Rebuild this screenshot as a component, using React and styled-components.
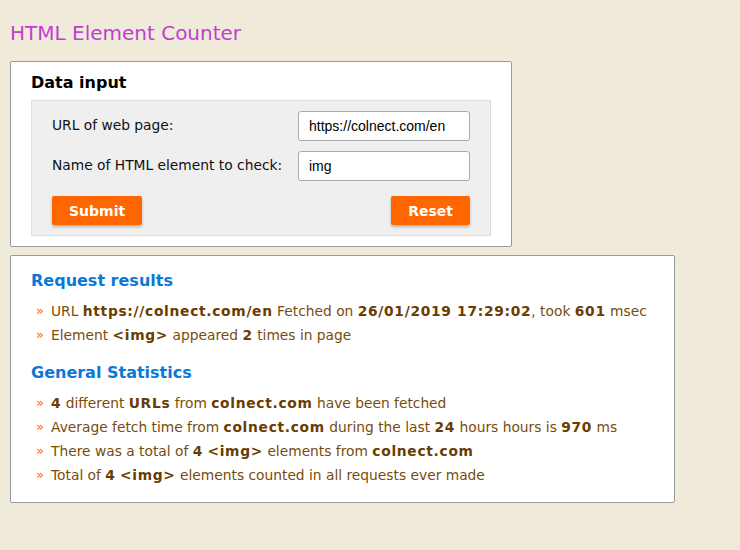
import React from 'react'
import styled, { createGlobalStyle } from 'styled-components'

const GlobalStyle = createGlobalStyle`
    body {
        margin: 0;
        background-color: #f0eada;
        font-family: "DejaVu Sans", Verdana, sans-serif;
    }
`

const App = () => {
    return (
        <Page>
            <GlobalStyle />
            <Title>HTML Element Counter</Title>
            <Card>
                <CardTitle>Data input</CardTitle>
                <Form onSubmit={(e) => e.preventDefault()}>
                    <Label htmlFor="url">URL of web page:</Label>
                    <Input id="url" defaultValue="https://colnect.com/en" />
                    <Label htmlFor="el">Name of HTML element to check:</Label>
                    <Input id="el" defaultValue="img" />
                    <Buttons>
                        <Button type="submit">Submit</Button>
                        <Button type="reset">Reset</Button>
                    </Buttons>
                </Form>
            </Card>
            <Card $wide>
                <SectionTitle>Request results</SectionTitle>
                <List>
                    <Item>URL <B>https://colnect.com/en</B> Fetched on <B>26/01/2019 17:29:02</B>, took <B>601</B> msec</Item>
                    <Item>Element <B>&lt;img&gt;</B> appeared <B>2</B> times in page</Item>
                </List>
                <SectionTitle>General Statistics</SectionTitle>
                <List>
                    <Item><B>4</B> different <B>URLs</B> from <B>colnect.com</B> have been fetched</Item>
                    <Item>Average fetch time from <B>colnect.com</B> during the last <B>24</B> hours hours is <B>970</B> ms</Item>
                    <Item>There was a total of <B>4</B> <B>&lt;img&gt;</B> elements from <B>colnect.com</B></Item>
                    <Item>Total of <B>4</B> <B>&lt;img&gt;</B> elements counted in all requests ever made</Item>
                </List>
            </Card>
        </Page>
    )
}

const Page = styled.div`
    padding: 20px 10px;
    display: flex;
    flex-direction: column;
    align-items: flex-start;
    gap: 8px;
`

const Title = styled.h1`
    margin: 0 0 7px;
    font-size: 20px;
    line-height: 26px;
    font-weight: normal;
    color: #c13ed1;
`

const Card = styled.div`
    box-sizing: border-box;
    width: ${p => (p.$wide ? '665px' : '502px')};
    background: #fff;
    border: 1px solid #999;
    border-radius: 2px;
    padding: ${p => (p.$wide ? '13px 20px 15px' : '10px 20px 10px')};
`

const CardTitle = styled.h2`
    margin: 0 0 6px;
    font-size: 16px;
    line-height: 22px;
    font-weight: bold;
    color: #000;
`

const Form = styled.form`
    display: grid;
    grid-template-columns: 1fr 172px;
    row-gap: 10px;
    align-items: center;
    background: #efefef;
    border: 1px solid #ddd;
    padding: 10px 20px 10px;
`

const Label = styled.label`
    font-size: 13.8px;
    color: #111;
    margin-top: -3px;
`

const Input = styled.input`
    box-sizing: border-box;
    height: 30px;
    width: 172px;
    border: 1px solid #aaa;
    border-radius: 3px;
    padding: 0 10px;
    font-family: "Liberation Sans", Arial, sans-serif;
    font-size: 14px;
    color: #000;
    background: #fff;
`

const Buttons = styled.div`
    grid-column: 1 / 3;
    display: flex;
    justify-content: space-between;
    margin-top: 5px;
`

const Button = styled.button`
    height: 29px;
    padding: 0 17px;
    border: none;
    border-radius: 2px;
    background: #ff6600;
    color: #fff;
    font-family: "DejaVu Sans", Verdana, sans-serif;
    font-size: 14px;
    font-weight: bold;
    box-shadow: 0 2px 3px rgba(0, 0, 0, 0.25);
    cursor: pointer;
`

const SectionTitle = styled.h3`
    margin: 0;
    font-size: 16px;
    line-height: 24px;
    font-weight: bold;
    color: #0a78d8;
    & + ul { margin-top: 6px; }
    ul + & { margin-top: 14px; }
`

const List = styled.ul`
    list-style: none;
    margin: 0;
    padding: 0;
`

const Item = styled.li`
    position: relative;
    padding-left: 20px;
    font-size: 13.8px;
    line-height: 24px;
    color: #7a4c0a;
    &::before {
        content: '»';
        position: absolute;
        left: 5px;
        color: #ff6600;
        font-size: 13px;
    }
`

const B = styled.b`
    color: #6a3c00;
    letter-spacing: 0.7px;
`

export default App
